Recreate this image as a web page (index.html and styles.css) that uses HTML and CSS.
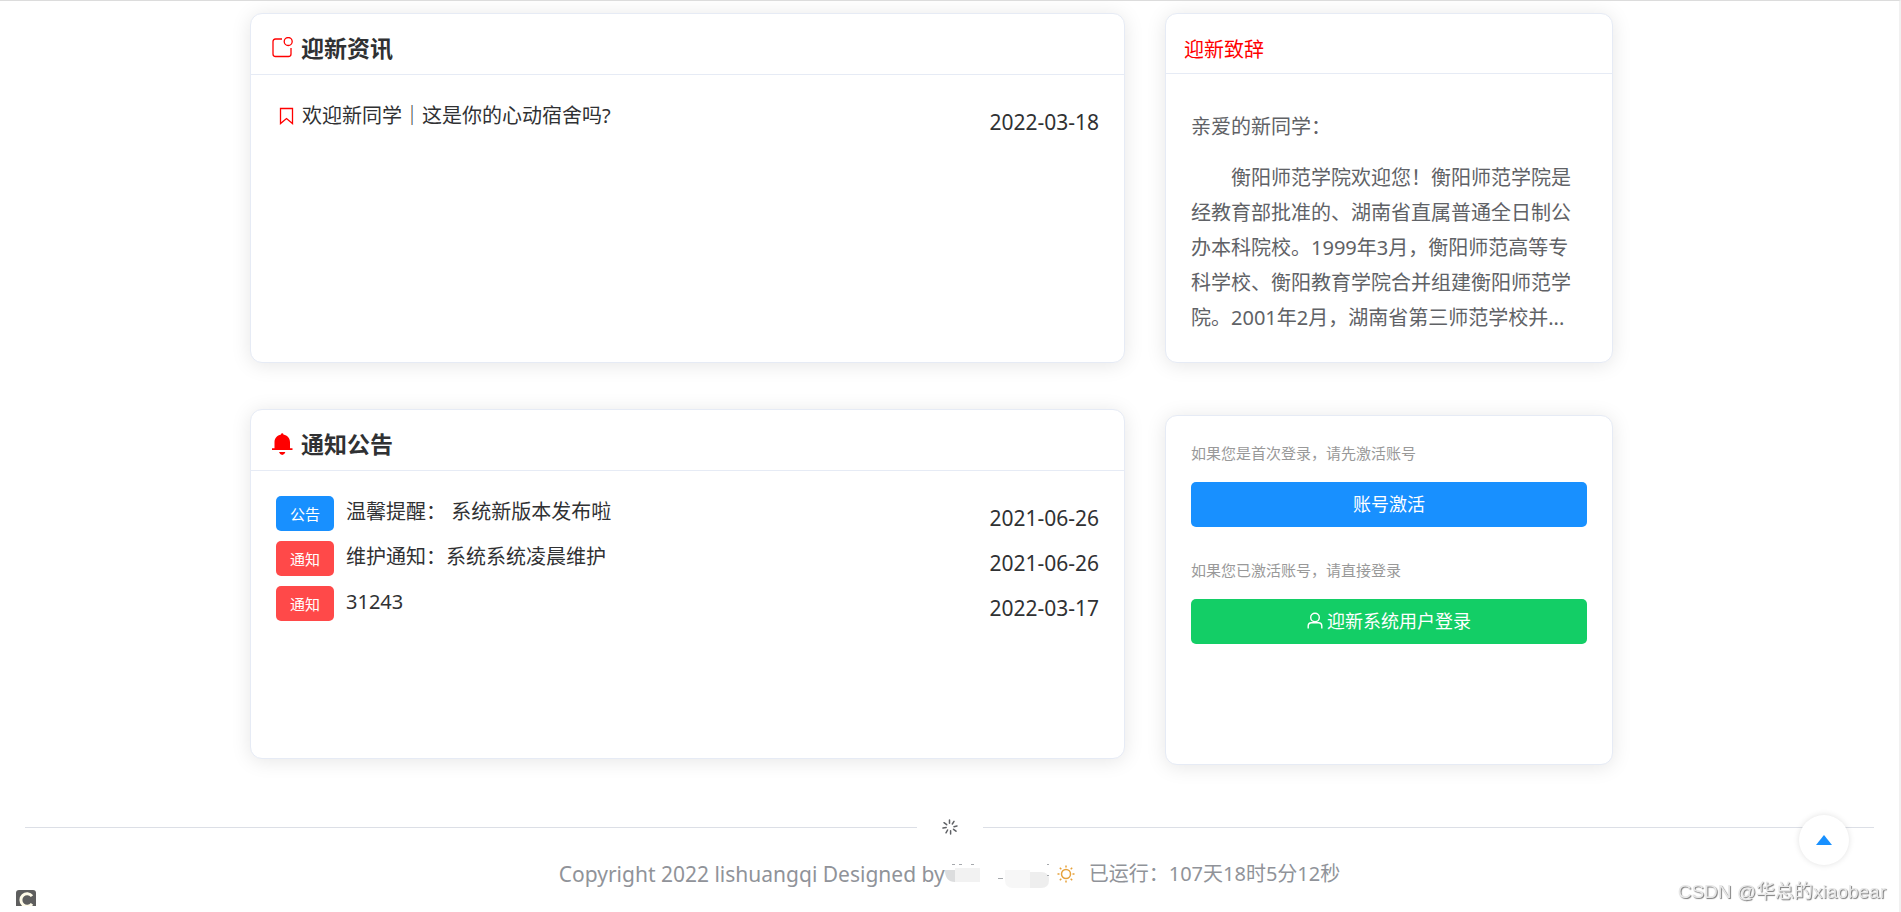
FILE: index.html
```html
<!DOCTYPE html>
<html lang="zh-CN">
<head>
<meta charset="utf-8">
<title>迎新系统</title>
<link rel="stylesheet" href="styles.css">
</head>
<body>
<main class="page">
<div class="board">
  <div class="column column-main">
    <section class="card">
      <h2 class="card-head">
        <svg class="head-icon" viewBox="0 0 22 22" fill="none" stroke="currentColor" stroke-width="1.3"><path d="M11 2H4.500Q2 2 2 4.500V17Q2 19.500 4.500 19.500H17.500Q20 19.500 20 17V11"/><circle cx="17.200" cy="4.500" r="4"/></svg>
        迎新资讯
      </h2>
      <ul class="list">
        <li class="row">
          <a class="row-link" href="#">
            <svg class="mark-icon" viewBox="0 0 22 18" fill="none" stroke="currentColor" stroke-width="1.300"><path d="M4.500 1.500H16.500V16.500L10.500 11.500L4.500 16.500Z"/></svg>
            <span>欢迎新同学｜这是你的心动宿舍吗?</span>
          </a>
          <time class="date">2022-03-18</time>
        </li>
      </ul>
    </section>
    <section class="card">
      <h2 class="card-head">
        <svg class="head-icon" viewBox="0 0 22 22" fill="currentColor"><path d="M10 1.500Q10 .2 11.200 .2T12.400 1.500C16.500 2.500 19 5.300 19 9.300V15.200H21.500V17.100H1V15.200H3.500V9.300C3.500 5.300 6 2.500 10 1.500ZM8 19H14.400Q13.500 21.900 11.200 21.900T8 19Z"/></svg>
        通知公告
      </h2>
      <ul class="list">
        <li class="row">
          <a class="row-link" href="#"><span class="tag tag-blue">公告</span><span>温馨提醒： 系统新版本发布啦</span></a>
          <time class="date">2021-06-26</time>
        </li>
        <li class="row">
          <a class="row-link" href="#"><span class="tag tag-red">通知</span><span>维护通知：系统系统凌晨维护</span></a>
          <time class="date">2021-06-26</time>
        </li>
        <li class="row">
          <a class="row-link" href="#"><span class="tag tag-red">通知</span><span>31243</span></a>
          <time class="date">2022-03-17</time>
        </li>
      </ul>
    </section>
  </div>
  <div class="column column-side">
    <section class="card">
      <h2 class="card-head side-head">迎新致辞</h2>
      <div class="speech">
        <p>亲爱的新同学：</p>
        <p class="speech-text">衡阳师范学院欢迎您！衡阳师范学院是经教育部批准的、湖南省直属普通全日制公办本科院校。1999年3月，衡阳师范高等专科学校、衡阳教育学院合并组建衡阳师范学院。2001年2月，湖南省第三师范学校并...</p>
      </div>
    </section>
    <section class="card entry">
      <p class="hint">如果您是首次登录，请先激活账号</p>
      <button class="btn btn-blue" type="button">账号激活</button>
      <p class="hint">如果您已激活账号，请直接登录</p>
      <button class="btn btn-green" type="button">
        <svg class="user-icon" viewBox="0 0 16 17" fill="none" stroke="currentColor" stroke-width="1.400"><circle cx="8" cy="5.500" r="4.300"/><path d="M1.200 16.500V14Q1.200 10.800 4.500 10.800H11.500Q14.800 10.800 14.800 14V16.500"/></svg>
        迎新系统用户登录
      </button>
    </section>
  </div>
</div>
</main>
<footer class="footer">
  <div class="divider">
    <svg class="spinner" viewBox="0 0 16 16" stroke="#606266" stroke-width="1.500" stroke-linecap="round"><path d="M7.500 1V4.300M12 2.300L10.300 5M15 7L12 7.700M14 12.200L11.500 10.300M8.600 15V11.800M4 13.800L5.600 11M1 9L4.200 8.400M2 3.700L4.700 5.700"/></svg>
  </div>
  <div class="copy">
    <span class="copy-owner">Copyright 2022 lishuangqi Designed by</span>
    <svg class="smudge" viewBox="0 0 104 32"><path d="M0 12H10V24Q0 24 0 12Z" fill="#dcddde"/><path d="M10 10H35V24H10Z" fill="#f2f2f2"/><path d="M60 12H85V30H68Q60 30 60 22Z" fill="#f7f7f7"/><path d="M85 14H96Q104 14 104 22Q104 30 96 30H85Z" fill="#eee"/><path d="M7 6.500H10M14 6.500H17M26 6.500H29M53 20.500H58M102 6.500H104M102 17.500H104" stroke="#a6a9ad"/></svg>
    <svg class="sun" viewBox="0 0 18 18" fill="none" stroke="#e6a23c" stroke-width="1.500"><circle cx="9" cy="9" r="4.500"/><path d="M9 .5V2.500M9 15.500V17.500M.5 9H2.500M15.500 9H17.500M2.800 2.800L4.300 4.300M13.700 13.700L15.200 15.200M15.200 2.800L13.700 4.300M4.300 13.700L2.800 15.200"/></svg>
    <span>已运行：107天18时5分12秒</span>
  </div>
</footer>
<button class="to-top" type="button" aria-label="回到顶部">
  <svg class="to-top-icon" viewBox="0 0 16 10"><path d="M8 0L16 10H0Z" fill="#1890ff"/></svg>
</button>
<svg class="corner-logo" viewBox="0 0 20 16"><path d="M0 20V3Q0 0 3 0H17Q20 0 20 3V20Z" fill="#5e5e5e"/><path d="M16 6.200A6.200 6.200 0 1 0 16 13.800" fill="none" stroke="#fffbe8" stroke-width="3"/></svg>
<div class="watermark">CSDN @华总的xiaobear</div>
</body>
</html>
```
FILE: styles.css
```css
* { box-sizing: border-box; }

body {
  margin: 0;
  min-height: 100vh;
  border-top: 1px solid #dcdcdc;
  border-right: 2px solid #f1f1f1;
  background: #fff;
  color: #303133;
  font: 20px/32px "Noto Sans", "Noto Sans CJK SC", sans-serif;
}

h2, p, ul { margin: 0; padding: 0; }
svg { display: block; flex: none; }

.page { padding: 12px 36px 0 0; }

.board {
  display: grid;
  grid-template-columns: 875fr 448fr;
  gap: 40px;
  max-width: 1363px;
  margin: 0 auto;
}

.column { display: flex; flex-direction: column; }
.column-main { gap: 46px; }
.column-side { gap: 52px; }

.card {
  min-height: 350px;
  border: 1px solid #e6ebf5;
  border-radius: 12px;
  background: #fff;
  box-shadow: 0 2px 20px rgba(0, 0, 0, 0.1);
}

.card-head {
  display: flex;
  align-items: center;
  gap: 8px;
  padding: 18px 20px 10px;
  border-bottom: 1px solid #e6ebf5;
  font-size: 23px;
  line-height: 32px;
}

.head-icon { width: 22px; height: 22px; color: #f00; }

.side-head {
  padding: 20px 18px 7px;
  color: #f00;
  font-size: 20px;
  font-weight: 400;
}

.list { padding: 25px 25px 0; list-style: none; }
.row { display: flex; justify-content: space-between; height: 45px; }
.row-link { display: flex; color: inherit; text-decoration: none; }
.mark-icon { width: 22px; height: 18px; margin: 7px 4px 0 0; color: #f00; }
.date { font-size: 21px; line-height: 45px; }

.tag {
  height: 35px;
  margin-right: 12px;
  padding: 0 14px;
  border-radius: 5px;
  color: #fff;
  font-size: 15px;
  line-height: 36px;
}
.tag-blue { background: #1890ff; }
.tag-red { background: #ff4949; }

.speech { padding: 35px 25px 20px; color: #606266; line-height: 35px; }
.speech-text { margin-top: 16px; text-indent: 2em; }

.entry { padding: 21px 25px; }
.hint { color: #999; font-size: 15px; line-height: 32px; }

.btn {
  display: flex;
  align-items: center;
  justify-content: center;
  gap: 4px;
  width: 100%;
  height: 45px;
  margin: 13px 0 27px;
  padding: 0 0 2px;
  border: 0;
  border-radius: 5px;
  color: #fff;
  font: inherit;
  font-size: 18px;
}
.btn-blue { background: #1890ff; }
.btn-green { background: #13ce66; }
.user-icon { width: 16px; height: 17px; }

.footer { padding: 0 25px; color: #909399; }
.divider { display: flex; align-items: center; gap: 25px; margin-top: 54px; }
.divider::before, .divider::after {
  content: "";
  flex: 1;
  height: 1px;
  background: #dcdfe6;
}
.spinner { width: 16px; height: 16px; }
.copy { display: flex; align-items: center; justify-content: center; margin-top: 23px; }
.copy-owner { font-size: 21px; }
.smudge { width: 104px; height: 32px; }
.sun { width: 18px; height: 18px; margin: 0 14px 0 8px; }

.to-top {
  position: fixed;
  right: 52px;
  bottom: 47px;
  display: flex;
  align-items: center;
  justify-content: center;
  width: 50px;
  height: 50px;
  padding: 0;
  border: 0;
  border-radius: 50%;
  background: #fff;
  box-shadow: 0 0 6px rgba(0, 0, 0, 0.12);
}
.to-top-icon { width: 16px; height: 10px; }

.corner-logo { position: fixed; left: 16px; bottom: 6px; width: 20px; height: 16px; }

.watermark {
  position: fixed;
  right: 15px;
  bottom: 4px;
  color: #e8e8e8;
  font: 19px/32px "Liberation Sans", "Noto Sans CJK SC", sans-serif;
  text-shadow: 1px 1px 1px #777;
}
```
